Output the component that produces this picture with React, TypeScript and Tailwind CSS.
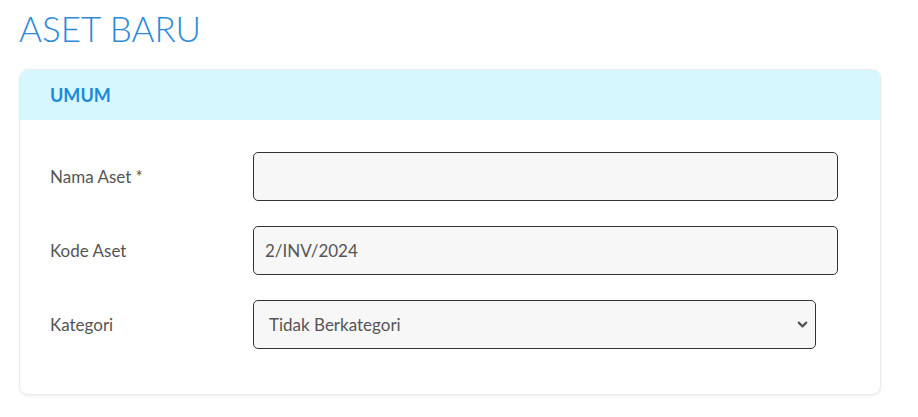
import { ChevronDown } from "lucide-react";

const FIELD =
  "h-[49px] rounded-[5px] border border-[#333] bg-[#f7f7f7] px-[11px] text-[17px] text-[#555] outline-none";

function Row({ label, children }: { label: string; children: React.ReactNode }) {
  return (
    <div className="flex items-center">
      <label className="w-[203px] shrink-0 text-[17px] text-[#555]">{label}</label>
      {children}
    </div>
  );
}

export default function App() {
  return (
    <div className="min-h-screen bg-white px-[19px] pt-[4px] font-['Lato',sans-serif]">
      <h1 className="text-[35px] font-light leading-[48px] text-[#2e8bd6]">ASET BARU</h1>

      <div className="mt-[17px] w-[862px] overflow-hidden rounded-[9px] border border-[#ececec] bg-white shadow-[0_1px_3px_rgba(0,0,0,0.08)]">
        <div className="flex h-[50px] items-center bg-[#d5f7fd] px-[30px]">
          <h2 className="text-[18px] font-bold text-[#1b8ad6]">UMUM</h2>
        </div>

        <div className="flex flex-col gap-[25px] pb-[45px] pl-[30px] pr-[42px] pt-[32px]">
          <Row label="Nama Aset *">
            <input className={FIELD + " flex-1"} />
          </Row>
          <Row label="Kode Aset">
            <input className={FIELD + " flex-1"} defaultValue="2/INV/2024" />
          </Row>
          <Row label="Kategori">
            <div className={FIELD + " relative flex w-[563px] items-center pl-[15px]"}>
              <span>Tidak Berkategori</span>
              <ChevronDown className="absolute right-[5px] h-[15px] w-[15px] text-[#555]" strokeWidth={3.5} />
            </div>
          </Row>
        </div>
      </div>
    </div>
  );
}
